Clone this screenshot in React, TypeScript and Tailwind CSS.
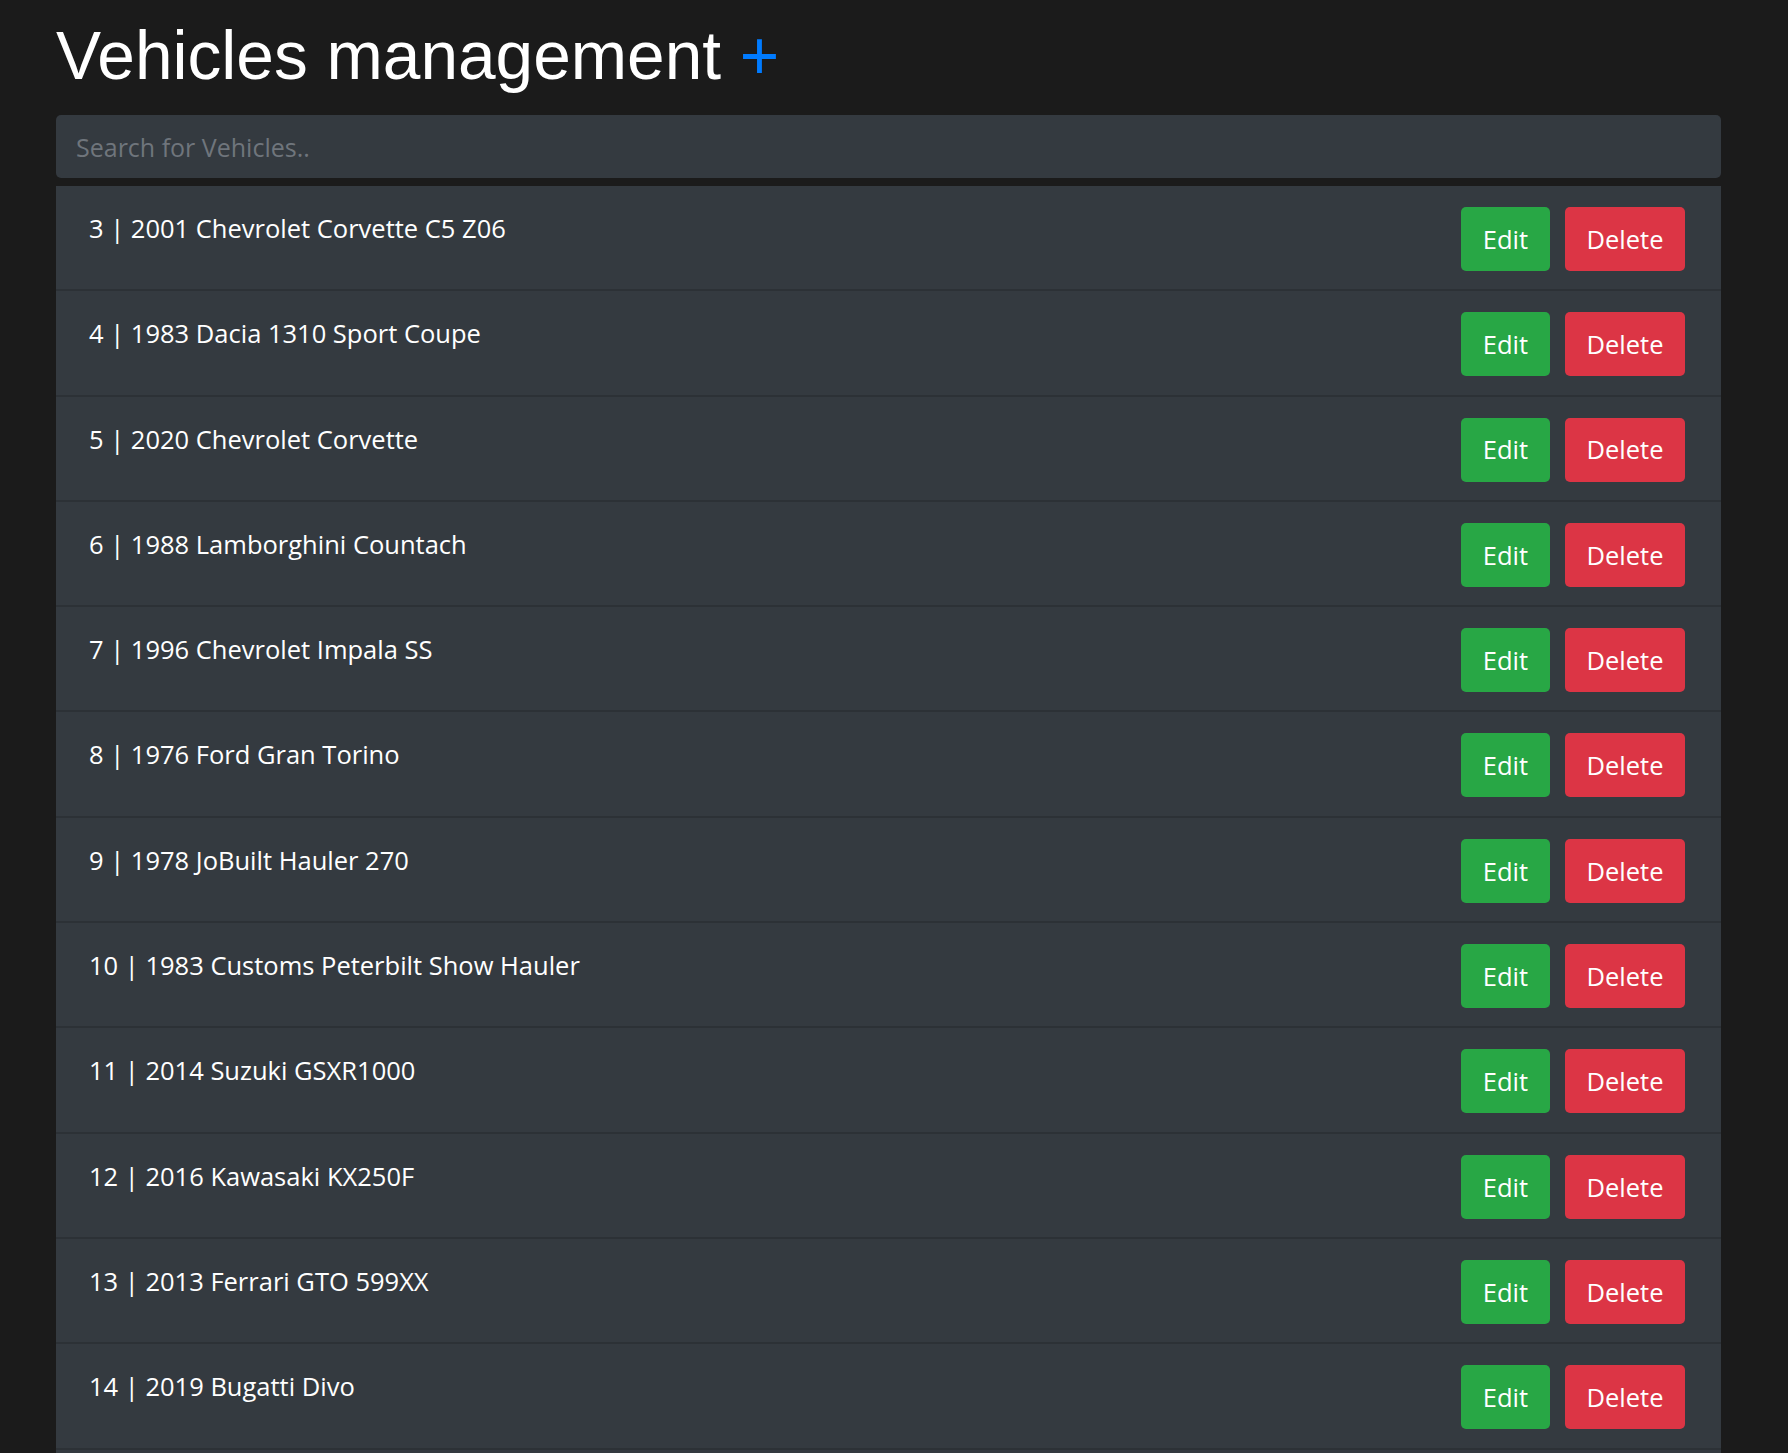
const vehicles = [
  { id: 3, name: '2001 Chevrolet Corvette C5 Z06' },
  { id: 4, name: '1983 Dacia 1310 Sport Coupe' },
  { id: 5, name: '2020 Chevrolet Corvette' },
  { id: 6, name: '1988 Lamborghini Countach' },
  { id: 7, name: '1996 Chevrolet Impala SS' },
  { id: 8, name: '1976 Ford Gran Torino' },
  { id: 9, name: '1978 JoBuilt Hauler 270' },
  { id: 10, name: '1983 Customs Peterbilt Show Hauler' },
  { id: 11, name: '2014 Suzuki GSXR1000' },
  { id: 12, name: '2016 Kawasaki KX250F' },
  { id: 13, name: '2013 Ferrari GTO 599XX' },
  { id: 14, name: '2019 Bugatti Divo' },
];

export default function App() {
  return (
    <div className="min-h-screen bg-[#1b1b1b] pl-[56px] pt-[16px] font-['Open_Sans',sans-serif]">
      <div className="w-[1665px]">
        <h1 className="font-['Liberation_Sans',Arial,sans-serif] text-[67.6px] leading-[80px] font-normal text-white">
          Vehicles management <span className="text-[#007bff] cursor-pointer">+</span>
        </h1>

        {/* search */}
        <input
          type="text"
          placeholder="Search for Vehicles.."
          className="mt-[19px] block w-full h-[63px] rounded-[5px] bg-[#343a40] pl-[20px] text-[25px] text-white placeholder:text-[#6f757c] outline-none"
        />

        {/* list */}
        <ul className="mt-[8px] bg-[#343a40] pb-[40px]">
          {vehicles.map((v) => (
            <li
              key={v.id}
              className="box-border flex h-[105.3px] items-start justify-between border-b-2 border-[#2c3136] pl-[33px] pr-[36px] pt-[21px]"
            >
              <span className="mt-[2px] text-[25.5px] leading-[38px] text-white">
                {v.id} | {v.name}
              </span>
              <div className="flex gap-[15px]">
                <button className="flex h-[64px] w-[89px] items-center justify-center rounded-[5px] bg-[#28a745] text-[25.5px] text-white">
                  Edit
                </button>
                <button className="flex h-[64px] w-[120px] items-center justify-center rounded-[5px] bg-[#dc3545] text-[25.5px] text-white">
                  Delete
                </button>
              </div>
            </li>
          ))}
        </ul>
      </div>
    </div>
  );
}
